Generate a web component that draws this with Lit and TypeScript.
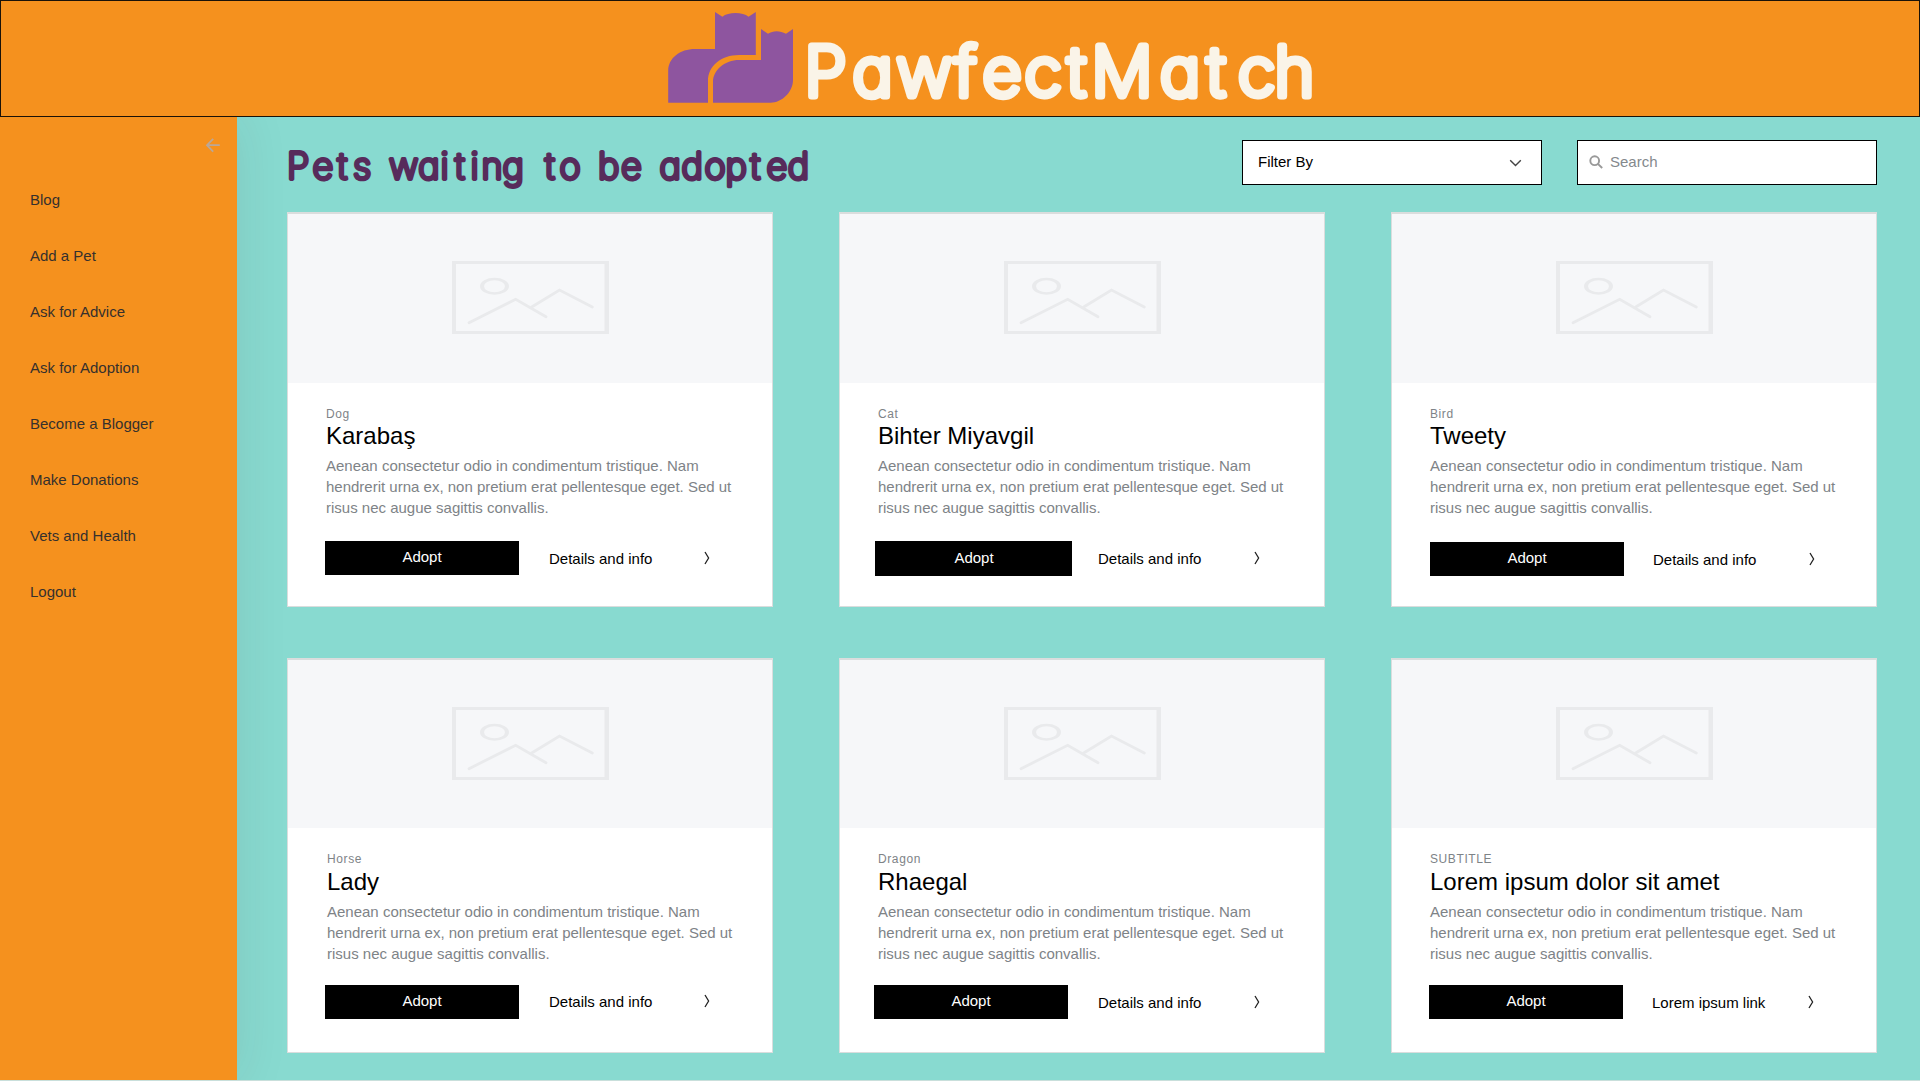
import { LitElement, html, css, svg } from "lit";
import { customElement, property } from "lit/decorators.js";

interface Pet {
  slot: string;
  kind: string;
  name: string;
  link: string;
}

const BLURB = [
  "Aenean consectetur odio in condimentum tristique. Nam",
  "hendrerit urna ex, non pretium erat pellentesque eget. Sed ut",
  "risus nec augue sagittis convallis.",
];

const PETS: Pet[] = [
  { slot: "p1", kind: "Dog", name: "Karabaş", link: "Details and info" },
  { slot: "p2", kind: "Cat", name: "Bihter Miyavgil", link: "Details and info" },
  { slot: "p3", kind: "Bird", name: "Tweety", link: "Details and info" },
  { slot: "p4", kind: "Horse", name: "Lady", link: "Details and info" },
  { slot: "p5", kind: "Dragon", name: "Rhaegal", link: "Details and info" },
  { slot: "p6", kind: "SUBTITLE", name: "Lorem ipsum dolor sit amet", link: "Lorem ipsum link" },
];

const MENU = [
  "Blog",
  "Add a Pet",
  "Ask for Advice",
  "Ask for Adoption",
  "Become a Blogger",
  "Make Donations",
  "Vets and Health",
  "Logout",
];

/* Hand-lettered text: every glyph has its own x position. */
const lettering = (cls: string, text: string, xs: number[], y: number) =>
  svg`<text class=${cls} x=${xs.join(" ")} y=${y}>${text}</text>`;

@customElement("pet-card")
export class PetCard extends LitElement {
  @property({ attribute: false }) pet!: Pet;

  static styles = css`
    :host {
      display: block;
      box-sizing: border-box;
      height: 395px;
      background: #fff;
      border: 1px solid #dadddd;
      border-top-width: 2px;
      font: 15px/21px "Liberation Sans", Arial, sans-serif;
    }
    .photo {
      display: flex;
      justify-content: center;
      height: 169px;
      background: #f6f7f9;
    }
    .placeholder {
      display: block;
      width: 157px;
      height: 73px;
      margin-top: 47px;
    }
    .body {
      padding: 22px 0 0 38px;
    }
    .kind {
      font-size: 12px;
      line-height: 18px;
      letter-spacing: 0.600px;
      color: #7e8387;
    }
    .name {
      margin: 0;
      font-size: 24px;
      font-weight: 400;
      line-height: 26px;
      color: #000;
    }
    .blurb {
      margin-top: 6px;
      color: #7e8387;
      white-space: nowrap;
    }
    .actions {
      display: flex;
      align-items: flex-start;
      margin: 23px 0 0 0;
    }
    .adopt {
      width: 194px;
      height: 34px;
      margin-left: -1px;
      box-sizing: border-box;
      padding: 0 0 2px;
      border: 0;
      background: #000;
      color: #fff;
      font: inherit;
      line-height: 30px;
      text-align: center;
    }
    .more {
      display: flex;
      width: 161px;
      justify-content: space-between;
      margin: 7px 0 0 30px;
      color: #000;
      text-decoration: none;
    }
    .arrow {
      display: block;
      width: 6px;
      height: 14px;
      margin-top: 3px;
    }
    .p2 .adopt { width: 197px; margin-left: -3px; padding-left: 1px; height: 35px; }
    .p2 .more { width: 162px; margin-left: 26px; }
    .p3 .adopt { margin-left: 0; }
    .p3 .actions { margin-top: 24px; }
    .p3 .more { width: 162px; margin-left: 29px; }
    .p4 .photo, .p5 .photo, .p6 .photo { height: 168px; }
    .p4 .name, .p5 .name, .p6 .name { line-height: 28px; }
    .p4 .blurb, .p5 .blurb, .p6 .blurb { margin-top: 5px; }
    .p4 .actions, .p5 .actions, .p6 .actions { margin-top: 21px; }
    .p4 .body { padding-left: 39px; }
    .p4 .adopt { margin-left: -2px; }
    .p4 .more { margin-top: 6px; }
    .p5 .adopt { margin-left: -4px; }
    .p5 .more { width: 162px; }
    .p6 .adopt { margin-left: -1px; }
    .p6 .more { width: 162px; margin-left: 29px; }
  `;

  render() {
    const p = this.pet;
    return html`
      <article class=${p.slot}>
        <div class="photo">
          <svg class="placeholder" viewBox="0 0 157 73" fill="none" stroke="#e9eaec">
            <path d="M0 0H157V73H0Z M4 3V70H152.500V3Z" fill="#e9eaec" fill-rule="evenodd" stroke="none" />
            <path d="M28 25.300a14.500 8.500 0 1 0 29 0a14.500 8.500 0 1 0-29 0Z M32 25.300a10.500 6 0 1 0 21 0a10.500 6 0 1 0-21 0Z" fill="#e9eaec" fill-rule="evenodd" stroke="none" />
            <path d="M17 61.700L63.700 38.300L94 55.700M79.700 46L107.500 29L140.300 46" stroke-width="2.800" stroke-linecap="round" />
          </svg>
        </div>
        <div class="body">
          <div class="kind">${p.kind}</div>
          <h2 class="name">${p.name}</h2>
          <div class="blurb">${BLURB.map((line) => html`<div>${line}</div>`)}</div>
          <div class="actions">
            <button class="adopt">Adopt</button>
            <a class="more">
              <span>${p.link}</span>
              <svg class="arrow" viewBox="0 0 6 14" fill="none" stroke="#222" stroke-width="1.300">
                <path d="M1 1L4.600 7L1 13" />
              </svg>
            </a>
          </div>
        </div>
      </article>
    `;
  }
}

@customElement("app-root")
export class AppRoot extends LitElement {
  static styles = css`
    :host {
      display: flex;
      flex-direction: column;
      box-sizing: border-box;
      width: 1920px;
      height: 1081px;
      overflow: hidden;
      background: #88dad0;
      border-bottom: 1px solid #c9dfdb;
      font: 15px/20px "Liberation Sans", Arial, sans-serif;
    }
    .top {
      flex: none;
      display: flex;
      box-sizing: border-box;
      height: 117px;
      padding-left: 649px;
      background: #f5911e;
      border: 1px solid #1a1208;
    }
    .brand {
      display: block;
      width: 680px;
      height: 115px;
    }
    .cats {
      fill: #8e559f;
    }
    .logotype,
    .headline {
      font-family: Inter, "Open Sans", sans-serif;
      font-feature-settings: "cv11" 1;
      stroke-linejoin: round;
      stroke-linecap: round;
    }
    .logotype {
      font-size: 68px;
      font-weight: 200;
      fill: #faf4e8;
      stroke: #faf4e8;
      stroke-width: 7px;
    }
    .headline {
      font-size: 36px;
      font-weight: 200;
      fill: #572b5b;
      stroke: #572b5b;
      stroke-width: 3.800px;
    }
    .frame {
      flex: 1;
      display: flex;
    }
    .side {
      width: 237px;
      flex: none;
      background: #f5911e;
      box-shadow: 0 0 50px rgba(60, 40, 40, 0.1);
      clip-path: inset(0 -60px 0 0);
    }
    .back {
      display: block;
      width: 16px;
      height: 16px;
      margin: 20px 0 0 205px;
    }
    .menu {
      list-style: none;
      margin: 37px 0 0;
      padding: 0 0 0 30px;
      color: #35302d;
    }
    .item {
      height: 56px;
    }
    .item span {
      display: block;
    }
    .content {
      flex: none;
      padding: 23px 0 0 50px;
      width: 1590px;
    }
    .bar {
      display: flex;
      height: 72px;
    }
    .title {
      display: block;
      width: 560px;
      height: 60px;
      margin: 0 395px 0 0;
    }
    .box {
      display: flex;
      box-sizing: border-box;
      width: 300px;
      height: 45px;
      border: 1px solid #000;
      background: #fff;
      padding-top: 11px;
    }
    .filter {
      justify-content: space-between;
      padding-left: 15px;
      padding-right: 19px;
      margin-right: 35px;
    }
    .chev {
      width: 13px;
      height: 8px;
      margin-top: 7px;
    }
    .search {
      padding-left: 11px;
      color: #84898d;
    }
    .lens {
      width: 14px;
      height: 14px;
      margin: 3px 7px 0 0;
    }
    .grid {
      display: grid;
      grid-template-columns: repeat(3, 486px);
      column-gap: 66px;
      row-gap: 51px;
    }
  `;

  render() {
    return html`
      <header class="top">
        <svg class="brand" viewBox="650 1 680 115">
          <g class="cats">
            <path d="M715 12L722.400 16.700C728 11.800 743 11.800 748.500 16.700L755.800 12V55H739C721 55 708 66 708 81V102.700H668.200V71C668.200 58 680 49 695 49H715Z" />
            <path d="M761 29L768 33.700C773 30.300 780 30.300 786 33.700L793 29V80C793 92 782 102.700 770.500 102.700H713V82C713 70 725 60 739 60H761Z" />
          </g>
          ${lettering("logotype", "PawfectMatch", [804.5, 852.5, 896.5, 954.5, 982.5, 1024.5, 1067.5, 1091.5, 1160, 1207, 1238, 1274.5], 95.500)}
        </svg>
      </header>
      <div class="frame">
        <nav class="side">
          <svg class="back" viewBox="0 0 16 16" fill="none" stroke="#b9a79a" stroke-width="1.800">
            <path d="M14.800 8.200H2M8.200 1.800L2 8.200L8.200 14.600" />
          </svg>
          <ul class="menu">
            ${MENU.map((label) => html`<li class="item"><span>${label}</span></li>`)}
          </ul>
        </nav>
        <main class="content">
          <div class="bar">
            <svg class="title" viewBox="287 140 560 60">
              ${lettering(
                "headline",
                "Pets waiting to be adopted",
                [287, 312.5, 337.5, 353, 375, 389, 418.3, 440.5, 455, 470.5, 481.5, 502.5, 525, 545, 559.6, 580, 598, 621, 640, 659.5, 681.6, 704.5, 725.5, 750.5, 766.4, 787.7],
                178.900,
              )}
            </svg>
            <div class="box filter">
              <span>Filter By</span>
              <svg class="chev" viewBox="0 0 13 8" fill="none" stroke="#444" stroke-width="1.400">
                <path d="M1.200 1.200L6.500 6.600L11.800 1.200" />
              </svg>
            </div>
            <div class="box search">
              <svg class="lens" viewBox="0 0 14 14" fill="none" stroke="#999" stroke-width="1.900">
                <circle cx="5.700" cy="5.700" r="4.400" />
                <path d="M8.900 8.900L13.200 13" />
              </svg>
              <span>Search</span>
            </div>
          </div>
          <section class="grid">${PETS.map((pet) => html`<pet-card .pet=${pet}></pet-card>`)}</section>
        </main>
      </div>
    `;
  }
}
